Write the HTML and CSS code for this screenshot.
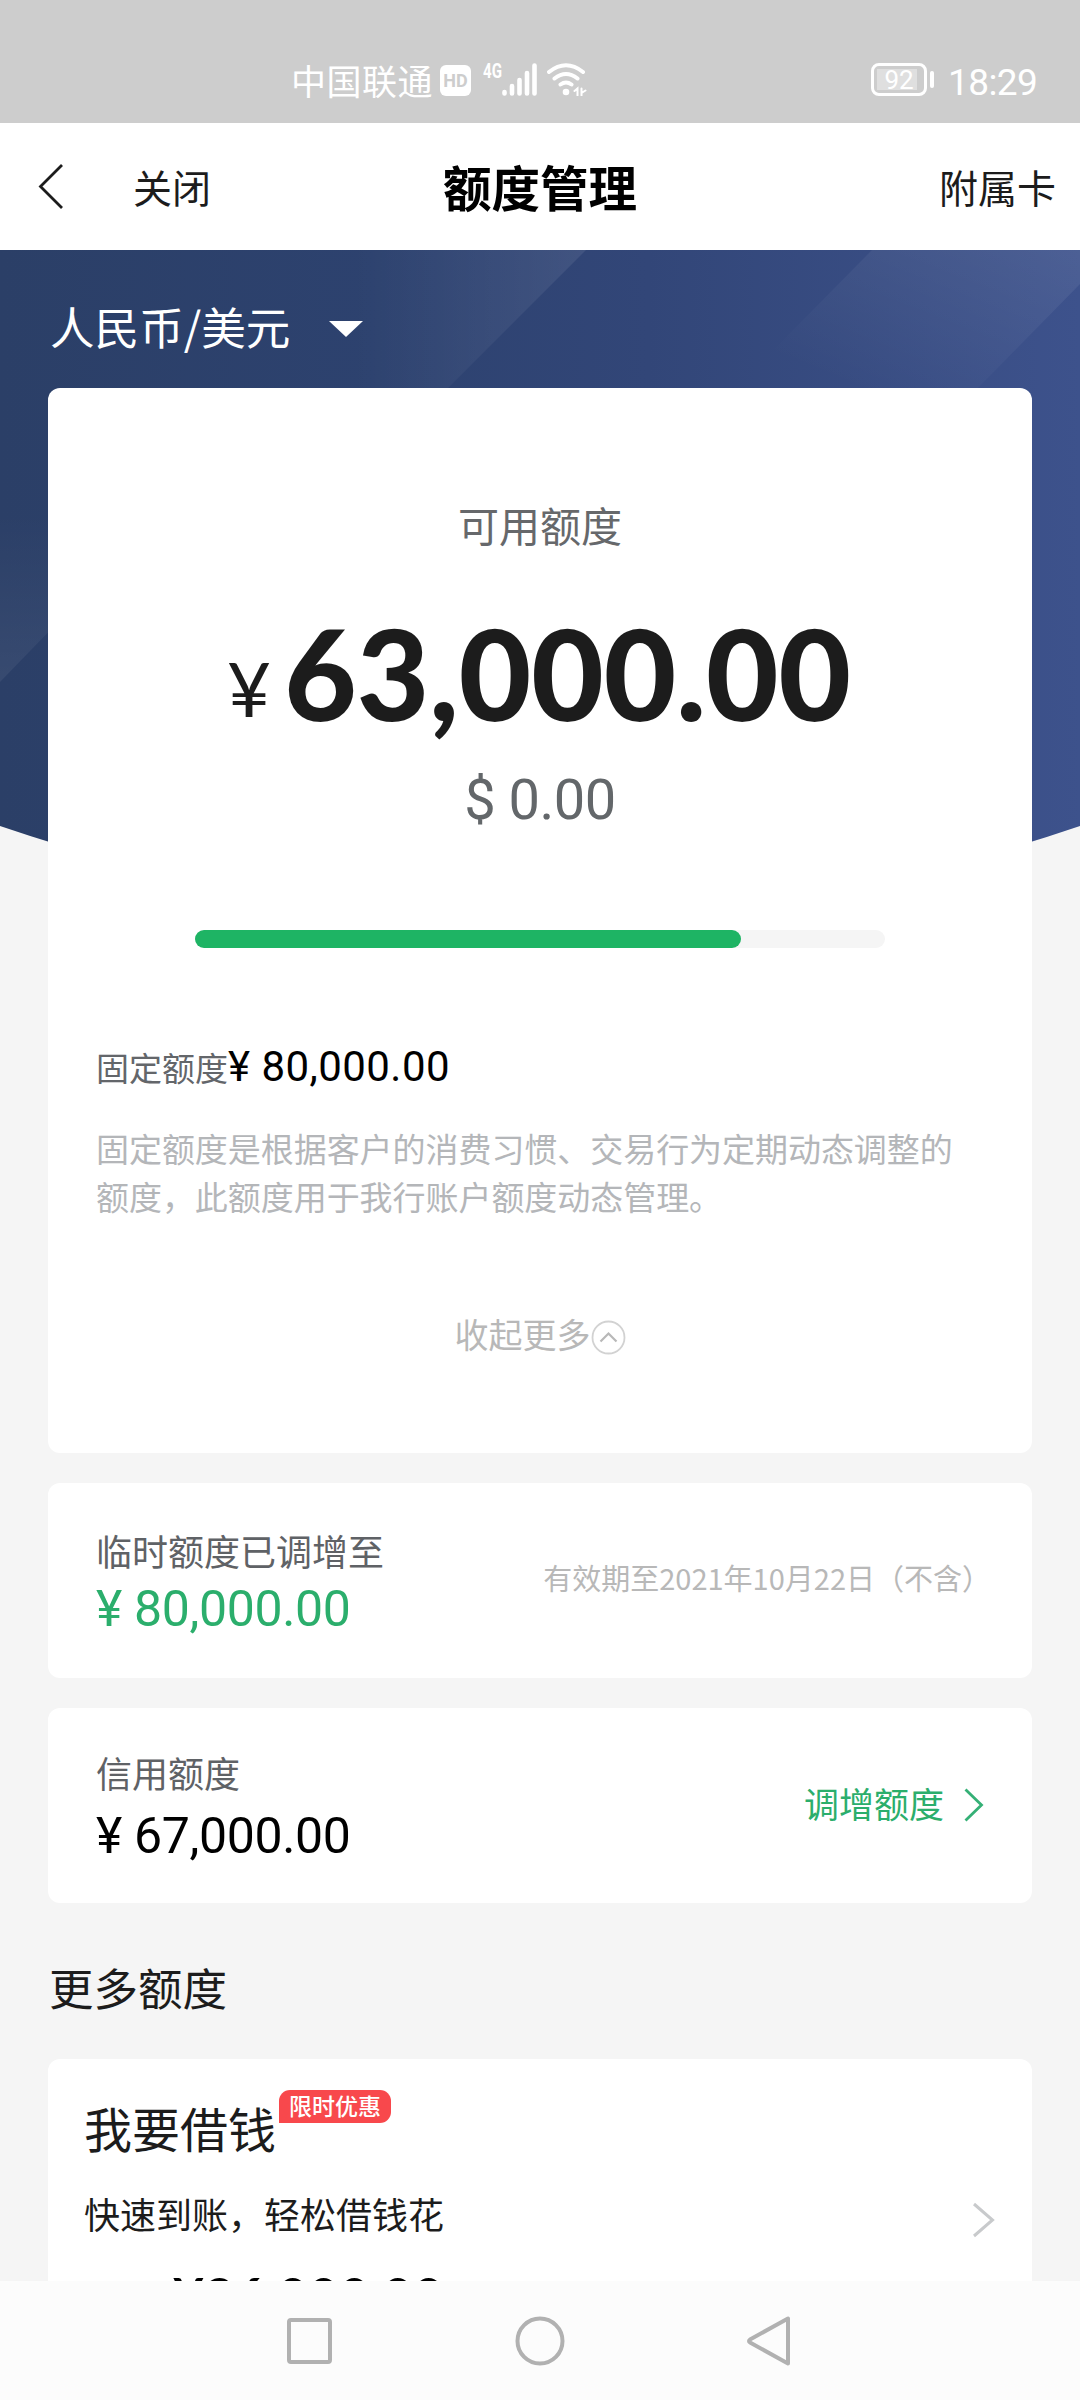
FILE: index.html
```html
<!DOCTYPE html>
<html lang="zh-CN">
<head>
<meta charset="utf-8">
<title>额度管理</title>
<link rel="stylesheet" href="styles.css">
</head>
<body>
<div class="screen">
  <header class="status">
    <div class="status-left">
      <span class="carrier">中国联通</span>
      <span class="hd">HD</span>
      <span class="net">4G</span>
      <svg class="signal" width="35" height="33" viewBox="0 0 35 33" stroke="#fff" stroke-width="4.6" stroke-linecap="round"><path d="M2.5 29v1.5M10 23v7.5M17.500 17v13.500M25 10v20.500M32.500 2.500v28"/></svg>
      <svg class="wifi" width="40" height="33" viewBox="0 0 40 33" fill="none" stroke="#fff" stroke-width="4" stroke-linecap="round"><path d="M2 9Q19 -4.500 36 9M7.500 15.500Q19 6.500 30.500 15.500M13.500 21.500Q19 17.500 24.500 21.500"/><circle cx="19" cy="29" r="3.300" fill="#fff" stroke="none"/><path d="M27.500 28l3-2.500v7M34.500 25.500v7M34.500 30l4-2.500" stroke-width="2"/></svg>
    </div>
    <div class="status-right">
      <span class="battery"><span class="level">92</span></span><span class="pole"></span>
      <span class="clock">18:29</span>
    </div>
  </header>

  <nav class="titlebar">
    <div class="nav-left">
      <svg width="26" height="46" viewBox="0 0 26 46" fill="none" stroke="#1c1c1c" stroke-width="2.800"><path d="M24 2L2.500 23.500L24 45"/></svg>
      <span>关闭</span>
    </div>
    <h1>额度管理</h1>
    <span class="nav-right">附属卡</span>
  </nav>

  <main class="content">
    <svg class="hero" width="1080" height="640" viewBox="0 0 1080 640">
      <defs>
        <linearGradient id="base" x1="0" y1="0" x2="1" y2="0"><stop offset="0" stop-color="#2b3f67"/><stop offset=".35" stop-color="#2d426f"/><stop offset=".6" stop-color="#324678"/><stop offset="1" stop-color="#3d528c"/></linearGradient>
        <linearGradient id="band" x1="0" y1="0" x2="1" y2="0"><stop offset=".6" stop-color="#fff" stop-opacity="0"/><stop offset="1" stop-color="#fff" stop-opacity=".08"/></linearGradient>
        <linearGradient id="band2" x1="0" y1="1" x2="1" y2="0"><stop offset=".2" stop-color="#fff" stop-opacity="0"/><stop offset="1" stop-color="#fff" stop-opacity=".08"/></linearGradient>
        <linearGradient id="band3" x1="0" y1="0" x2="0" y2="1"><stop offset=".2" stop-color="#fff" stop-opacity="0"/><stop offset="1" stop-color="#fff" stop-opacity=".06"/></linearGradient>
      </defs>
      <path fill="url(#base)" d="M0 0H1080V576Q540 760 0 576Z"/>
      <path fill="url(#band)" d="M0 0H586L446 140H0Z"/>
      <path fill="url(#band2)" d="M872 0H1080V34L970 146H728Z"/>
      <path fill="url(#band3)" d="M0 220H60V370L0 432Z"/>
    </svg>

    <div class="currency">人民币/美元
      <svg width="34" height="16" viewBox="0 0 34 16"><path fill="#fff" d="M0 0H34L17 16Z"/></svg>
    </div>

    <section class="card main">
      <div class="label">可用额度</div>
      <div class="total"><span class="yen">¥</span><span class="big">63,000.00</span></div>
      <div class="usd">$ 0.00</div>
      <div class="bar"><div class="fill" style="width:79.1%"></div></div>
      <div class="fixed"><span>固定额度</span><b>¥ 80,000.00</b></div>
      <p class="desc">固定额度是根据客户的消费习惯、交易行为定期动态调整的额度，此额度用于我行账户额度动态管理。</p>
      <div class="more">收起更多<svg width="35" height="35" viewBox="0 0 35 35" fill="none"><circle cx="17.500" cy="17.500" r="16" stroke="#d2d2d2" stroke-width="1.800"/><path d="M9.500 21.500L17.500 13.500L25.500 21.500" stroke="#b8b8b8" stroke-width="2.200"/></svg></div>
    </section>

    <section class="card row">
      <div><div class="name">临时额度已调增至</div><div class="amount green">¥ 80,000.00</div></div>
      <div class="expire">有效期至2021年10月22日（不含）</div>
    </section>

    <section class="card row credit">
      <div><div class="name">信用额度</div><div class="amount">¥ 67,000.00</div></div>
      <div class="raise">调增额度<svg width="20" height="34" viewBox="0 0 20 34" fill="none" stroke="#35b076" stroke-width="2.800"><path d="M1.500 1.500L17.500 17L1.500 32.500"/></svg></div>
    </section>

    <h2>更多额度</h2>

    <section class="card loan">
      <div class="loan-title">我要借钱<span class="tag">限时优惠</span></div>
      <div class="loan-row"><span>快速到账，轻松借钱花</span><svg width="24" height="36" viewBox="0 0 24 36" fill="none" stroke="#c8cacc" stroke-width="3"><path d="M2 2L20.500 18L2 34"/></svg></div>
      <div class="loan-amount">¥26,000.00</div>
    </section>
  </main>

  <footer class="sysnav">
    <svg width="50" height="52" viewBox="0 0 50 52" fill="none" stroke="#b1b1b1" stroke-width="4"><rect x="5" y="5" width="41" height="42" rx="2"/></svg>
    <svg width="52" height="52" viewBox="0 0 52 52" fill="none" stroke="#b1b1b1" stroke-width="4"><circle cx="26" cy="26" r="22.500"/></svg>
    <svg width="50" height="52" viewBox="0 0 50 52" fill="none" stroke="#b1b1b1" stroke-width="4" stroke-linejoin="round"><path d="M42 3.500V48.500L4 27.500Q2 26 4 24.500Z"/></svg>
  </footer>
</div>
</body>
</html>
```

FILE: styles.css
```css
* { box-sizing: border-box; margin: 0; padding: 0; }
body { background: #f5f5f5; font-family: "Noto Sans CJK SC", sans-serif; color: #1c1c1c; }
svg { display: block; flex: none; }
.screen { width: 1080px; height: 2400px; display: flex; flex-direction: column; overflow: hidden; }

.status { height: 123px; background: #cdcdcd; color: #fff; display: flex; justify-content: space-between; padding: 63px 44px 0 291px; flex: none; }
.status-left, .status-right { display: flex; align-items: flex-start; height: 34px; }
.carrier { font-size: 35px; line-height: 34px; letter-spacing: .5px; }
.hd { width: 31px; height: 31px; margin: 2px 0 0 7px; border-radius: 6px; background: #fff; color: #cdcdcd; font: 700 18px/31px Roboto, sans-serif; text-align: center; }
.net { width: 20px; margin-left: 12px; font: 700 21px/17px Roboto, sans-serif; white-space: nowrap; transform: scaleX(.72); transform-origin: left; }
.signal { margin-left: -1px; }
.wifi { margin-left: 10px; }
.battery { width: 56px; height: 33px; border: 3px solid #fff; border-radius: 8px; padding: 3px; display: flex; }
.level { flex: 1; background: linear-gradient(90deg, #dfdfdf 92%, #cdcdcd 92%); font: 400 26px/22px Roboto, sans-serif; text-align: center; }
.pole { width: 4px; height: 17px; margin: 8px 0 0 3px; border-radius: 2px; background: #fff; }
.clock { width: 88px; margin-left: 14px; font: 400 37px/39px Roboto, sans-serif; letter-spacing: -.6px; white-space: nowrap; }

.titlebar { height: 127px; background: #fff; display: grid; grid-template-columns: 1fr auto 1fr; align-items: center; padding: 0 24px 2px 38px; flex: none; font-size: 39px; }
.nav-left { display: flex; align-items: center; gap: 69px; }
.titlebar h1 { font-size: 48.5px; line-height: 60px; color: #000; margin-left: -14px; }
.nav-right { text-align: right; }

.content { position: relative; flex: 1; min-height: 0; overflow: hidden; padding: 0 48px; }
.hero { position: absolute; left: 0; top: 0; z-index: -1; }
.currency { height: 138px; padding: 13px 0 0 2px; color: #fff; font-size: 44.6px; display: flex; align-items: center; gap: 39px; }
.currency svg { margin-top: 6px; }
.card { background: #fff; border-radius: 12px; }
.main { height: 1065px; padding: 106px 48px 0; }
.label { font-size: 41px; line-height: 60px; text-align: center; color: #66686b; }
.total { display: flex; justify-content: center; align-items: baseline; font-family: Lato, sans-serif; line-height: 150px; margin-top: 44px; }
.yen { font-size: 76px; margin-left: -2px; transform: translateY(-4px); }
.big { font-size: 125px; font-weight: 900; margin-left: 13px; }
.usd { font: 400 56px/70px Roboto, sans-serif; color: #63676a; text-align: center; letter-spacing: -.5px; margin-top: -2px; }
.bar { width: 690px; height: 18px; margin: 95px auto 0 99px; border-radius: 9px; background: #f5f5f5; }
.fill { height: 100%; border-radius: 9px; background: #1eb464; }
.fixed { margin-top: 91px; height: 56px; display: flex; align-items: baseline; font-size: 33px; line-height: 56px; color: #63666a; }
.fixed b { font: 400 42px/56px Roboto, sans-serif; letter-spacing: .45px; color: #000; }
.desc { font-size: 33px; line-height: 48px; color: #b4b6b9; margin-top: 29px; letter-spacing: -.05px; }
.more { display: flex; justify-content: center; align-items: center; font-size: 34px; line-height: 50px; color: #b8b8b8; margin-top: 89px; }
.more svg { margin-top: 6px; }
.row { height: 195px; margin-top: 30px; padding: 0 48px; display: flex; justify-content: space-between; }
.name { font-size: 36px; line-height: 50px; color: #5f6266; margin-top: 42px; }
.amount { font: 400 50px/60px Roboto, sans-serif; letter-spacing: -.35px; color: #000; margin-top: 4px; }
.credit .name { margin-top: 39px; }
.credit .amount { margin-top: 9px; }
.green { color: #2bae6c; }
.expire { font-size: 29px; line-height: 50px; margin: 69px -7px 0 0; color: #b8b8b8; }
.raise { display: flex; align-items: center; gap: 20px; height: 50px; margin-top: 69px; font-size: 35px; color: #2bae6c; }
.raise svg { margin-top: 6px; }
h2 { font-size: 44.5px; font-weight: 400; line-height: 60px; padding-left: 1px; margin: 54px 0 42px; }
.loan { height: 300px; padding: 24px 36px 0; }
.loan-title { display: flex; font-size: 48px; line-height: 88px; }
.tag { width: 112px; height: 33px; margin: 7px 0 0 3px; border-radius: 11px 11px 11px 0; background: #f8484c; color: #fff; font-size: 23px; font-weight: 500; line-height: 31px; text-align: center; }
.loan-row { display: flex; align-items: center; justify-content: space-between; font-size: 36px; line-height: 50px; margin-top: 17px; }
.loan-row svg { transform: translateY(7px); }
.loan-amount { font: 700 53px/60px Lato, sans-serif; color: #000; padding-left: 89px; margin-top: 29px; }

.sysnav { height: 119px; background: #fcfcfc; display: flex; justify-content: center; align-items: center; gap: 180px; flex: none; }
```
